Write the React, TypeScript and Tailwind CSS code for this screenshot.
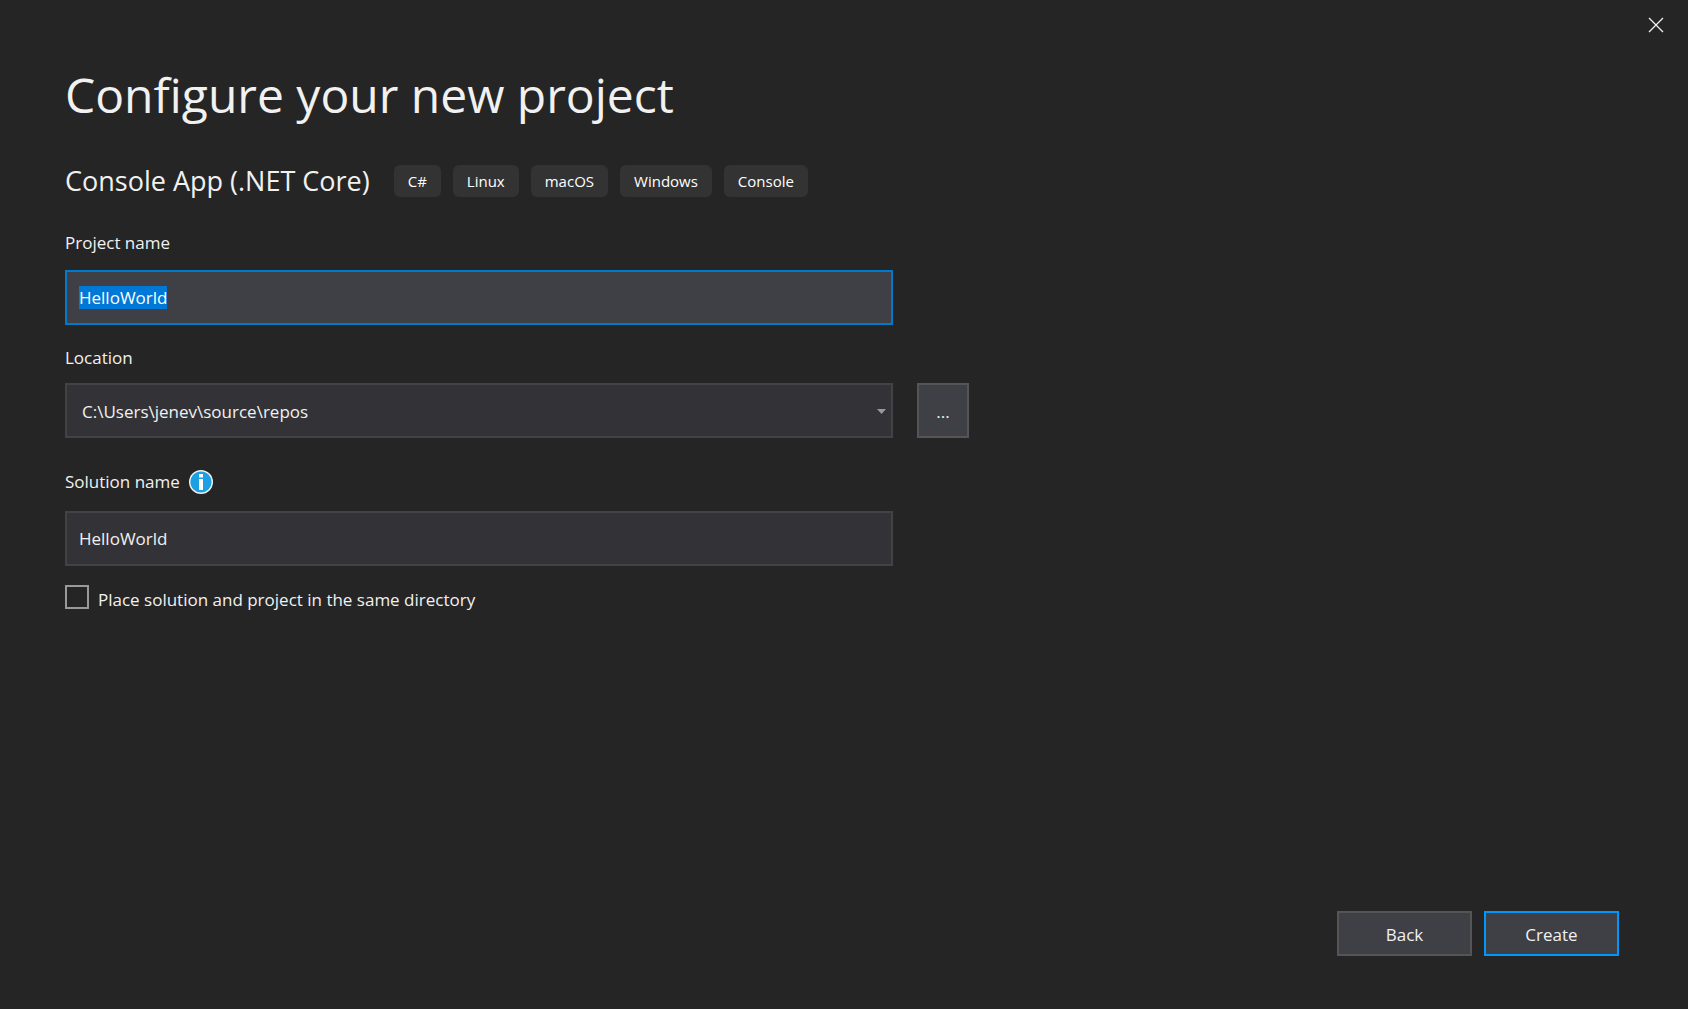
import React, { useEffect, useRef, useState } from 'react'

const tags = ["C#", "Linux", "macOS", "Windows", "Console"]

const InfoIcon = () => (
    <svg width="24" height="24" viewBox="0 0 24 24" aria-hidden="true">
        <circle cx="12" cy="12" r="12" fill="#f3f3f3" />
        <circle cx="12" cy="12" r="10.6" fill="#1ba1e2" />
        <path d="M10 4h4v3.500h-4zM10 9h4v11h-4z" fill="#ffffff" />
    </svg>
)

const CloseIcon = () => (
    <svg width="16" height="16" viewBox="0 0 16 16" fill="none" stroke="#f1f1f1" strokeWidth="1.3" aria-hidden="true">
        <path d="M1 1l14 14M15 1L1 15" />
    </svg>
)

const App = () => {
    const nameRef = useRef<HTMLInputElement>(null)
    const [projectName, setProjectName] = useState("HelloWorld")
    const [solutionName, setSolutionName] = useState("HelloWorld")

    useEffect(() => {
        nameRef.current?.focus()
        nameRef.current?.select()
    }, [])

    return (
        <div className="relative min-h-screen bg-[#252526] pt-[61px] pb-[53px] pl-[65px] pr-[69px] flex flex-col text-[#f1f1f1] text-[17px] leading-[26px] font-['Open_Sans','Noto_Sans',sans-serif]">
            <button aria-label="Close" className="absolute top-[17px] right-6 cursor-pointer">
                <CloseIcon />
            </button>

            <h1 className="text-[48px] leading-[68px]">Configure your new project</h1>

            <div className="mt-9 flex flex-row flex-wrap items-center gap-x-6 gap-y-3">
                <h2 className="text-[27px] leading-8">Console App (.NET Core)</h2>

                <ul className="flex flex-row flex-wrap gap-3">
                    {tags.map((tag) => (
                        <li key={tag} className="h-8 px-[14px] rounded-md bg-[#333334] text-white text-[15px] leading-8">
                            {tag}
                        </li>
                    ))}
                </ul>
            </div>

            <form id="project" className="mt-[33px] flex flex-col items-start" onSubmit={(e) => e.preventDefault()}>
                <label htmlFor="name">Project name</label>
                <input
                    ref={nameRef}
                    id="name"
                    type="text"
                    value={projectName}
                    onChange={(e) => setProjectName(e.target.value)}
                    className="mt-[14px] h-[55px] w-full max-w-[828px] px-3 border-2 border-[#007acc] bg-[#3f3f46] focus:outline-none selection:bg-[#0078d7] selection:text-white"
                />

                <label htmlFor="location" className="mt-5">Location</label>
                <div className="mt-3 w-full flex flex-row gap-6">
                    <div className="relative w-full max-w-[828px]">
                        <select id="location" className="appearance-none h-[55px] w-full pt-[2px] pl-[15px] pr-8 border-2 border-[#434346] bg-[#333337] focus:outline-none">
                            <option>C:\Users\jenev\source\repos</option>
                        </select>
                        <svg width="9" height="5" viewBox="0 0 9 5" className="absolute right-[7px] top-[26px] pointer-events-none" aria-hidden="true">
                            <path d="M0 0h9L4.500 5z" fill="#999999" />
                        </svg>
                    </div>
                    <button type="button" aria-label="Browse" className="h-[55px] w-[52px] pt-[2px] shrink-0 border-2 border-[#555555] bg-[#3f3f46] cursor-pointer">
                        ...
                    </button>
                </div>

                <div className="mt-[31px] flex flex-row items-center gap-[9px]">
                    <label htmlFor="solution">Solution name</label>
                    <InfoIcon />
                </div>
                <input
                    id="solution"
                    type="text"
                    value={solutionName}
                    onChange={(e) => setSolutionName(e.target.value)}
                    className="mt-4 h-[55px] w-full max-w-[828px] px-3 border-2 border-[#434346] bg-[#333337] focus:outline-none"
                />

                <div className="mt-[19px] flex flex-row items-start gap-[9px]">
                    <input
                        id="same"
                        type="checkbox"
                        className="appearance-none size-6 border-2 border-[#999999] checked:bg-[#007acc]"
                    />
                    <label htmlFor="same" className="pt-[2px]">Place solution and project in the same directory</label>
                </div>
            </form>

            <div className="mt-auto flex flex-row justify-end gap-3">
                <button type="button" className="h-[45px] w-[135px] pt-[2px] border-2 border-[#555555] bg-[#3f3f46] cursor-pointer">
                    Back
                </button>
                <button type="submit" form="project" className="h-[45px] w-[135px] pt-[2px] border-2 border-[#0097fb] bg-[#3f3f46] cursor-pointer">
                    Create
                </button>
            </div>
        </div>
    )
}

export default App
